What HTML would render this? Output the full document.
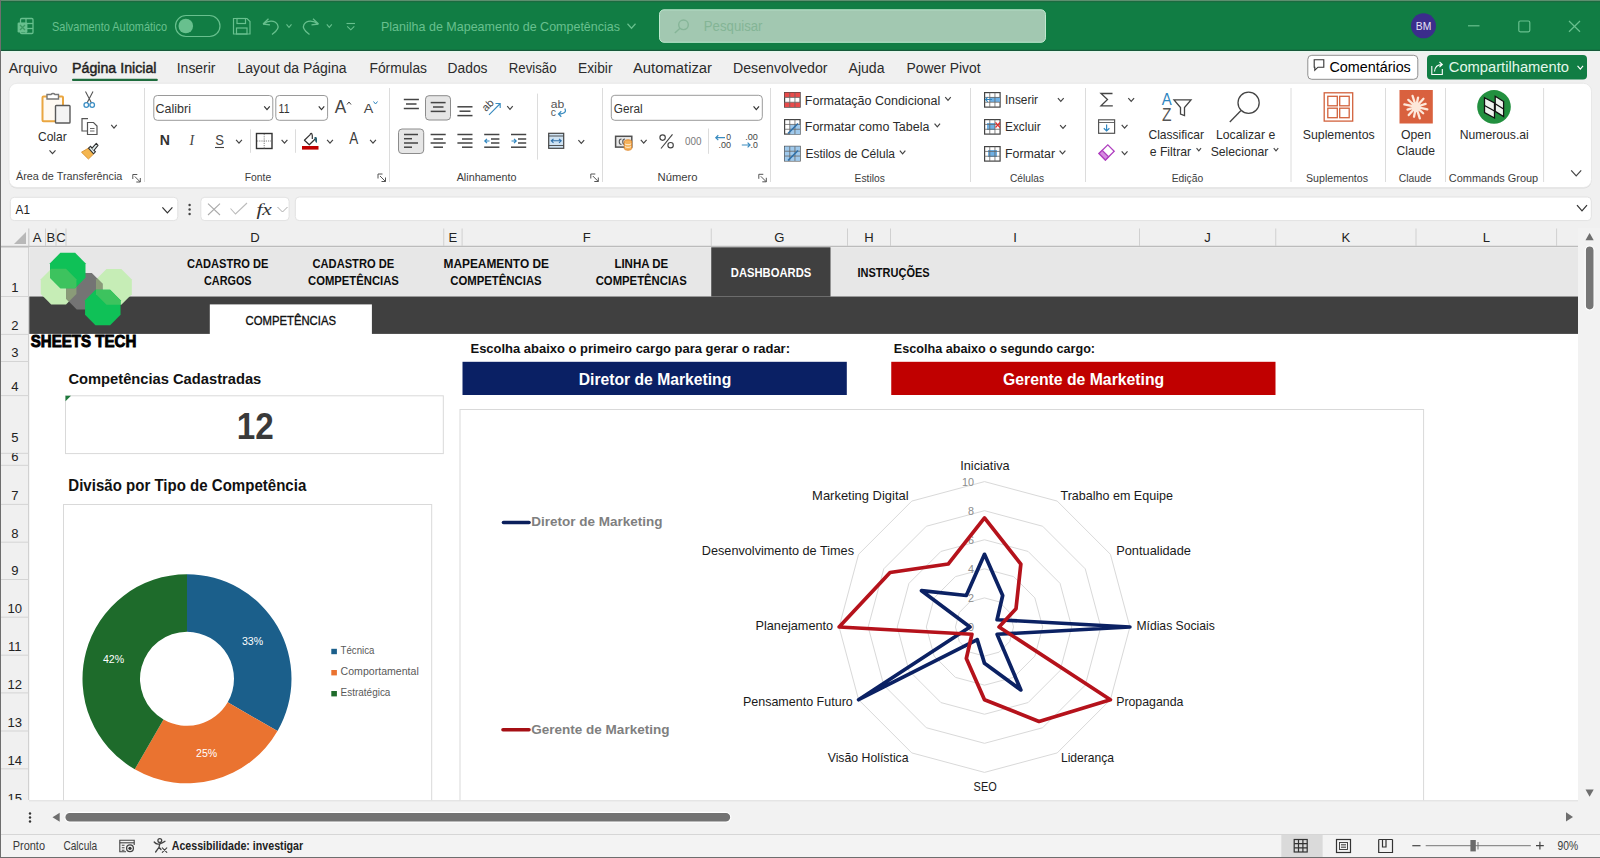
<!DOCTYPE html><html><head><meta charset="utf-8"><title>Excel</title><style>html,body{margin:0;padding:0;width:1600px;height:858px;overflow:hidden;background:#f0f0f0}svg{display:block;font-family:"Liberation Sans",sans-serif}</style></head><body>
<svg width="1600" height="858" viewBox="0 0 1600 858">
<rect x="0" y="0" width="1600" height="858" fill="#f0f0f0" />
<rect x="0" y="0" width="1600" height="50" fill="#117d44" />
<rect x="0" y="0" width="1600" height="1" fill="#5d8f6f" />
<rect x="0" y="1" width="1600" height="1.2" fill="#1c6b40" />
<rect x="0" y="49.8" width="1600" height="1.2" fill="#17583a" />
<g fill="none" stroke="#68c08e" stroke-width="1.3"><rect x="20.5" y="18.5" width="12.5" height="15" rx="1.2"/><line x1="26" y1="18.5" x2="26" y2="33.5"/><line x1="20.5" y1="23.5" x2="33" y2="23.5"/><line x1="26" y1="28.5" x2="33" y2="28.5"/></g>
<rect x="17.6" y="22.6" width="9.8" height="9.8" rx="1.2" fill="#68c08e"/>
<path d="M20 25 L25 30 M25 25 L20 30" stroke="#3d9a63" stroke-width="1.3"/>
<text x="52.00" y="30.60" font-size="12.06" fill="#68c08e" textLength="115.00" lengthAdjust="spacingAndGlyphs" >Salvamento Automático</text>
<rect x="175.5" y="15.5" width="44.5" height="21" rx="10.5" fill="none" stroke="#68c08e" stroke-width="1.2"/>
<circle cx="185.8" cy="26" r="7.3" fill="#68c08e"/>
<g fill="none" stroke="#68c08e" stroke-width="1.2"><path d="M233.5 18.5 H247 L250 21.5 V34 H233.5 Z"/><rect x="237" y="18.5" width="8.5" height="5"/><rect x="236.5" y="28" width="10.5" height="6"/></g>
<g fill="none" stroke="#68c08e" stroke-width="1.3"><path d="M263 24 L268.5 18.8 M263 24 L270 24.8"/><path d="M263.5 24 C268 20 275 20 277.5 24.5 C279.5 28 277 31 272 34.5"/></g>
<path d="M286.50 24.30 L289.00 27.30 L291.50 24.30" fill="none" stroke="#68c08e" stroke-width="1.1"/>
<g fill="none" stroke="#68c08e" stroke-width="1.3"><path d="M318.5 24 L313 18.8 M318.5 24 L311.5 24.8"/><path d="M318 24 C313.5 20 306.5 20 304 24.5 C302 28 304.5 31 309.5 34.5"/></g>
<path d="M326.80 24.30 L329.30 27.30 L331.80 24.30" fill="none" stroke="#68c08e" stroke-width="1.1"/>
<g fill="none" stroke="#68c08e" stroke-width="1.1"><line x1="346.5" y1="23.5" x2="355" y2="23.5"/><path d="M347.2 26.3 L350.8 29.8 L354.3 26.3"/></g>
<text x="381.00" y="31.10" font-size="12.94" fill="#68c08e" textLength="239.00" lengthAdjust="spacingAndGlyphs" >Planilha de Mapeamento de Competências</text>
<path d="M627.50 23.75 L631.50 28.25 L635.50 23.75" fill="none" stroke="#68c08e" stroke-width="1.2"/>
<rect x="659.5" y="9.8" width="386" height="32.5" rx="4.5" fill="#a2c8b1" stroke="#bfe8cf" stroke-width="1"/>
<g fill="none" stroke="#86b598" stroke-width="1.4"><circle cx="683.5" cy="24.8" r="4.8"/><line x1="680" y1="28.3" x2="674.8" y2="33"/></g>
<text x="703.80" y="30.50" font-size="14.53" fill="#84b596" textLength="58.70" lengthAdjust="spacingAndGlyphs" >Pesquisar</text>
<circle cx="1423.5" cy="25.8" r="12.5" fill="#3b2d8c"/>
<text x="1423.50" y="30.00" font-size="11.63" fill="#e8e4f6" text-anchor="middle" textLength="15.50" lengthAdjust="spacingAndGlyphs" >BM</text>
<line x1="1468" y1="25.8" x2="1479.5" y2="25.8" stroke="#68c08e" stroke-width="1.2" />
<rect x="1518.8" y="21" width="11" height="10.8" rx="1.5" fill="none" stroke="#68c08e" stroke-width="1.2"/>
<path d="M1569 21 L1580 31.8 M1580 21 L1569 31.8" stroke="#68c08e" stroke-width="1.2"/>
<rect x="0" y="51" width="1600" height="1.5" fill="#e6f7ed" />
<text x="8.75" y="73.20" font-size="13.95" fill="#2b2b2b" textLength="48.75" lengthAdjust="spacingAndGlyphs" >Arquivo</text>
<text x="72.00" y="73.20" font-size="13.95" fill="#1f1f1f" textLength="84.50" lengthAdjust="spacingAndGlyphs" stroke="#1f1f1f" stroke-width="0.45">Página Inicial</text>
<text x="176.75" y="73.20" font-size="13.95" fill="#2b2b2b" textLength="38.75" lengthAdjust="spacingAndGlyphs" >Inserir</text>
<text x="237.50" y="73.20" font-size="13.95" fill="#2b2b2b" textLength="109.00" lengthAdjust="spacingAndGlyphs" >Layout da Página</text>
<text x="369.50" y="73.20" font-size="13.95" fill="#2b2b2b" textLength="57.50" lengthAdjust="spacingAndGlyphs" >Fórmulas</text>
<text x="447.50" y="73.20" font-size="13.95" fill="#2b2b2b" textLength="40.00" lengthAdjust="spacingAndGlyphs" >Dados</text>
<text x="508.75" y="73.20" font-size="13.95" fill="#2b2b2b" textLength="47.75" lengthAdjust="spacingAndGlyphs" >Revisão</text>
<text x="578.00" y="73.20" font-size="13.95" fill="#2b2b2b" textLength="34.50" lengthAdjust="spacingAndGlyphs" >Exibir</text>
<text x="633.00" y="73.20" font-size="13.95" fill="#2b2b2b" textLength="79.00" lengthAdjust="spacingAndGlyphs" >Automatizar</text>
<text x="733.00" y="73.20" font-size="13.95" fill="#2b2b2b" textLength="94.50" lengthAdjust="spacingAndGlyphs" >Desenvolvedor</text>
<text x="848.50" y="73.20" font-size="13.95" fill="#2b2b2b" textLength="36.00" lengthAdjust="spacingAndGlyphs" >Ajuda</text>
<text x="906.50" y="73.20" font-size="13.95" fill="#2b2b2b" textLength="74.00" lengthAdjust="spacingAndGlyphs" >Power Pivot</text>
<rect x="72" y="78.8" width="85.8" height="2.2" rx="1" fill="#1d6c3d"/>
<rect x="1307.8" y="55.3" width="110" height="24" rx="4" fill="#ffffff" stroke="#8f8f8f" stroke-width="1"/>
<path d="M1314.2 59.8 H1323.8 V67.2 H1318 L1314.8 70.2 V67.2 H1314.2 Z" fill="none" stroke="#333" stroke-width="1.1"/>
<text x="1329.50" y="72.30" font-size="14.53" textLength="81.30" lengthAdjust="spacingAndGlyphs" >Comentários</text>
<rect x="1427" y="55" width="160" height="24.5" rx="4" fill="#117d44"/>
<g fill="none" stroke="#ffffff" stroke-width="1.1"><path d="M1431.8 66 V74.5 H1442.3 V69"/><path d="M1434.5 71.5 C1435 66.5 1438 64.5 1442 64.5 M1439.5 62 L1442.3 64.5 L1439.5 67"/></g>
<text x="1448.80" y="72.30" font-size="14.53" fill="#e3f7ea" textLength="120.20" lengthAdjust="spacingAndGlyphs" >Compartilhamento</text>
<path d="M1577.55 65.90 L1580.30 69.10 L1583.05 65.90" fill="none" stroke="#ffffff" stroke-width="1.1"/>
<rect x="9" y="84.5" width="1582.5" height="104" rx="8" fill="#d6d6d6" opacity="0.8"/>
<rect x="9" y="83.3" width="1582.5" height="104.2" rx="8" fill="#ffffff" stroke="#e4e4e4" stroke-width="0.8"/>
<line x1="537.5" y1="93.6" x2="537.5" y2="159.6" stroke="#dcdcdc" stroke-width="1" />
<line x1="144.5" y1="88" x2="144.5" y2="182" stroke="#dcdcdc" stroke-width="1" />
<line x1="389.5" y1="88" x2="389.5" y2="182" stroke="#dcdcdc" stroke-width="1" />
<line x1="602.5" y1="88" x2="602.5" y2="182" stroke="#dcdcdc" stroke-width="1" />
<line x1="770.5" y1="88" x2="770.5" y2="182" stroke="#dcdcdc" stroke-width="1" />
<line x1="970.5" y1="88" x2="970.5" y2="182" stroke="#dcdcdc" stroke-width="1" />
<line x1="1085.5" y1="88" x2="1085.5" y2="182" stroke="#dcdcdc" stroke-width="1" />
<line x1="1291" y1="88" x2="1291" y2="182" stroke="#dcdcdc" stroke-width="1" />
<line x1="1385.5" y1="88" x2="1385.5" y2="182" stroke="#dcdcdc" stroke-width="1" />
<line x1="1445.5" y1="88" x2="1445.5" y2="182" stroke="#dcdcdc" stroke-width="1" />
<line x1="1543.6" y1="88" x2="1543.6" y2="182" stroke="#dcdcdc" stroke-width="1" />
<text x="16.00" y="180.40" font-size="11.63" fill="#3c3c3c" textLength="106.40" lengthAdjust="spacingAndGlyphs" >Área de Transferência</text>
<text x="244.70" y="180.90" font-size="11.63" fill="#3c3c3c" textLength="26.50" lengthAdjust="spacingAndGlyphs" >Fonte</text>
<text x="456.70" y="181.00" font-size="11.63" fill="#3c3c3c" textLength="59.80" lengthAdjust="spacingAndGlyphs" >Alinhamento</text>
<text x="657.50" y="181.00" font-size="11.63" fill="#3c3c3c" textLength="40.10" lengthAdjust="spacingAndGlyphs" >Número</text>
<text x="854.60" y="181.50" font-size="11.63" fill="#3c3c3c" textLength="30.20" lengthAdjust="spacingAndGlyphs" >Estilos</text>
<text x="1010.00" y="181.50" font-size="11.63" fill="#3c3c3c" textLength="34.00" lengthAdjust="spacingAndGlyphs" >Células</text>
<text x="1171.70" y="181.50" font-size="11.63" fill="#3c3c3c" textLength="31.50" lengthAdjust="spacingAndGlyphs" >Edição</text>
<text x="1306.00" y="181.50" font-size="11.63" fill="#3c3c3c" textLength="62.00" lengthAdjust="spacingAndGlyphs" >Suplementos</text>
<text x="1398.70" y="181.70" font-size="11.63" fill="#3c3c3c" textLength="32.80" lengthAdjust="spacingAndGlyphs" >Claude</text>
<text x="1448.80" y="181.70" font-size="11.63" fill="#3c3c3c" textLength="89.40" lengthAdjust="spacingAndGlyphs" >Commands Group</text>
<g fill="none" stroke="#555" stroke-width="1"><path d="M132.8 179 V174.5 H137.3"/><path d="M134.8 176.5 L140.3 182 M140.3 178 V182 H136.3"/></g>
<g fill="none" stroke="#555" stroke-width="1"><path d="M378.0 178.5 V174.0 H382.5"/><path d="M380.0 176.0 L385.5 181.5 M385.5 177.5 V181.5 H381.5"/></g>
<g fill="none" stroke="#555" stroke-width="1"><path d="M590.8 178.5 V174.0 H595.3"/><path d="M592.8 176.0 L598.3 181.5 M598.3 177.5 V181.5 H594.3"/></g>
<g fill="none" stroke="#555" stroke-width="1"><path d="M758.8 178.8 V174.3 H763.3"/><path d="M760.8 176.3 L766.3 181.8 M766.3 177.8 V181.8 H762.3"/></g>
<g fill="none" stroke-width="1.6"><rect x="42.5" y="96.5" width="20.5" height="24.8" rx="1" stroke="#eaa640" fill="#fffaf2" stroke-width="2"/><path d="M47 96.5 V94.5 H51 A2.5 2.5 0 0 1 55 94.5 H58.5 V99 H47 Z" stroke="#777" fill="#fff" stroke-width="1.4"/></g>
<rect x="55.5" y="105.5" width="14.5" height="17.5" rx="0.8" fill="#f4f4f4" stroke="#5a5a5a" stroke-width="1.4"/>
<text x="38.00" y="140.60" font-size="13.37" fill="#2b2b2b" textLength="28.70" lengthAdjust="spacingAndGlyphs" >Colar</text>
<path d="M49.50 150.35 L52.50 153.65 L55.50 150.35" fill="none" stroke="#444" stroke-width="1.2"/>
<g fill="none" stroke="#555" stroke-width="1.1"><path d="M85.5 91.5 L91.5 103 M93 91.5 L87 103"/></g>
<g fill="none" stroke="#3b8ec4" stroke-width="1.3"><circle cx="86.3" cy="105" r="2.3"/><circle cx="92.2" cy="105" r="2.3"/></g>
<g fill="none" stroke="#555" stroke-width="1.2"><path d="M88 118.7 H82 V131 H87"/><path d="M87.5 122.5 H93.5 L97 126 V134.5 H87.5 Z"/><path d="M90 128.5 H94.5 M90 131 H94.5" stroke-width="0.9"/></g>
<path d="M111.25 124.85 L114.00 128.15 L116.75 124.85" fill="none" stroke="#444" stroke-width="1.2"/>
<path d="M81.5 152.2 L88.4 159 L93.6 154 L88.7 148 Z" fill="#f4b650" stroke="#d8902c" stroke-width="0.9" stroke-linejoin="round"/>
<path d="M88.5 148.2 L93.6 153.8 L95.4 151.8 L90.5 146.4 Z" fill="#e8f2f2" stroke="#2e2e2e" stroke-width="1.1"/>
<path d="M91.8 148.3 L96.3 143.3 L98 145.3 L93.9 150.5" fill="#e2eeee" stroke="#2e2e2e" stroke-width="1.1" stroke-linejoin="round"/>
<rect x="153.8" y="95.5" width="119" height="24.8" rx="3.5" fill="#fff" stroke="#9a9a9a" stroke-width="1"/>
<rect x="275.8" y="95.5" width="51.8" height="24.8" rx="3.5" fill="#fff" stroke="#9a9a9a" stroke-width="1"/>
<text x="155.60" y="112.90" font-size="13.37" fill="#333" textLength="35.40" lengthAdjust="spacingAndGlyphs" >Calibri</text>
<path d="M264.25 106.40 L267.00 109.60 L269.75 106.40" fill="none" stroke="#333" stroke-width="1.2"/>
<text x="278.60" y="112.90" font-size="13.37" fill="#333" textLength="11.00" lengthAdjust="spacingAndGlyphs" >11</text>
<path d="M318.75 106.40 L321.50 109.60 L324.25 106.40" fill="none" stroke="#333" stroke-width="1.2"/>
<text x="334.80" y="112.90" font-size="17.44" fill="#444" textLength="11.50" lengthAdjust="spacingAndGlyphs" >A</text>
<path d="M347 104.5 L349 102 L351 104.5" fill="none" stroke="#444" stroke-width="1"/>
<text x="363.80" y="112.90" font-size="12.94" fill="#444" textLength="9.50" lengthAdjust="spacingAndGlyphs" >A</text>
<path d="M373.5 101.5 L375.5 104 L377.5 101.5" fill="none" stroke="#2f86c0" stroke-width="1"/>
<text x="159.80" y="145.25" font-size="13.95" font-weight="700" fill="#333" textLength="10.20" lengthAdjust="spacingAndGlyphs" >N</text>
<text x="189.50" y="145.25" font-size="13.95" fill="#444" font-family="Liberation Serif" font-style="italic">I</text>
<text x="215.30" y="145.25" font-size="13.95" fill="#444" textLength="8.70" lengthAdjust="spacingAndGlyphs" >S</text>
<line x1="215" y1="147.5" x2="224" y2="147.5" stroke="#444" stroke-width="1.1" />
<path d="M236.10 139.85 L239.00 143.15 L241.90 139.85" fill="none" stroke="#444" stroke-width="1.2"/>
<line x1="250.5" y1="129.3" x2="250.5" y2="152.8" stroke="#dcdcdc" stroke-width="1" />
<rect x="256.5" y="133.5" width="15.5" height="15" fill="none" stroke="#333" stroke-width="1.4"/>
<path d="M264.2 134 V148.5 M257 141 H271.5" stroke="#777" stroke-width="0.9" stroke-dasharray="1.2 1"/>
<path d="M281.60 139.85 L284.50 143.15 L287.40 139.85" fill="none" stroke="#444" stroke-width="1.2"/>
<line x1="295.5" y1="129.3" x2="295.5" y2="152.8" stroke="#dcdcdc" stroke-width="1" />
<path d="M310.2 134.6 L304.4 140.2 L309.3 144.8 L315.2 139 M310.2 134.6 C310.5 132.8 312 133 312.3 135.5 V139" fill="none" stroke="#333" stroke-width="1.2" stroke-linejoin="round"/>
<path d="M314.3 137.5 C315.5 136.5 317 137 317 139 V143 L315.5 142 Z" fill="#2b6070"/>
<rect x="302" y="146" width="16.5" height="3.6" fill="#c00000" />
<path d="M327.10 139.85 L330.00 143.15 L332.90 139.85" fill="none" stroke="#444" stroke-width="1.2"/>
<text x="349.30" y="144.40" font-size="16.28" fill="#3a3a3a" textLength="9.00" lengthAdjust="spacingAndGlyphs" font-weight="300">A</text>
<path d="M370.10 139.85 L373.00 143.15 L375.90 139.85" fill="none" stroke="#444" stroke-width="1.2"/>
<rect x="425.5" y="95.7" width="25" height="24.3" rx="3.5" fill="#e6e6e6" stroke="#8c8c8c" stroke-width="1"/>
<rect x="398.5" y="129" width="25.2" height="24.5" rx="3.5" fill="#e6e6e6" stroke="#8c8c8c" stroke-width="1"/>
<line x1="403.8" y1="99.5" x2="418.9" y2="99.5" stroke="#444" stroke-width="1.5" />
<line x1="406" y1="104" x2="416.5" y2="104" stroke="#444" stroke-width="1.5" />
<line x1="403.8" y1="108.5" x2="418.9" y2="108.5" stroke="#444" stroke-width="1.5" />
<line x1="430.7" y1="102.6" x2="445.6" y2="102.6" stroke="#444" stroke-width="1.5" />
<line x1="433" y1="107" x2="443.5" y2="107" stroke="#444" stroke-width="1.5" />
<line x1="430.7" y1="111.4" x2="445.6" y2="111.4" stroke="#444" stroke-width="1.5" />
<line x1="457.4" y1="106.8" x2="472.5" y2="106.8" stroke="#444" stroke-width="1.5" />
<line x1="459.5" y1="111.2" x2="470.5" y2="111.2" stroke="#444" stroke-width="1.5" />
<line x1="457.4" y1="115.6" x2="472.5" y2="115.6" stroke="#444" stroke-width="1.5" />
<text x="482.00" y="109.50" font-size="10.61" fill="#444" textLength="12.00" lengthAdjust="spacingAndGlyphs" transform="rotate(-45 487 106)">ab</text>
<path d="M489 114.8 L499.8 104 M495.5 103.5 H500.2 V108" fill="none" stroke="#3a8cc0" stroke-width="1.1"/>
<path d="M507.25 106.20 L510.00 109.40 L512.75 106.20" fill="none" stroke="#444" stroke-width="1.2"/>
<text x="550.80" y="108.20" font-size="10.17" fill="#555" textLength="13.50" lengthAdjust="spacingAndGlyphs" >ab</text>
<text x="550.80" y="115.80" font-size="10.17" fill="#555" textLength="5.20" lengthAdjust="spacingAndGlyphs" >c</text>
<path d="M564.8 108.5 C566.5 111.5 565 114 558.5 114 M561.3 111.3 L558.5 114 L561.3 116.7" fill="none" stroke="#3a8cc0" stroke-width="1.2"/>
<line x1="404" y1="134.5" x2="418" y2="134.5" stroke="#444" stroke-width="1.5" />
<line x1="404" y1="138.7" x2="412" y2="138.7" stroke="#444" stroke-width="1.5" />
<line x1="404" y1="143" x2="418" y2="143" stroke="#444" stroke-width="1.5" />
<line x1="404" y1="147.2" x2="412" y2="147.2" stroke="#444" stroke-width="1.5" />
<line x1="430.6" y1="134.5" x2="445.7" y2="134.5" stroke="#444" stroke-width="1.5" />
<line x1="433.5" y1="139" x2="443" y2="139" stroke="#444" stroke-width="1.5" />
<line x1="430.6" y1="143" x2="445.7" y2="143" stroke="#444" stroke-width="1.5" />
<line x1="433.5" y1="147.2" x2="443" y2="147.2" stroke="#444" stroke-width="1.5" />
<line x1="457.4" y1="134.5" x2="472.5" y2="134.5" stroke="#444" stroke-width="1.5" />
<line x1="462" y1="139" x2="472.5" y2="139" stroke="#444" stroke-width="1.5" />
<line x1="457.4" y1="143" x2="472.5" y2="143" stroke="#444" stroke-width="1.5" />
<line x1="462" y1="147.2" x2="472.5" y2="147.2" stroke="#444" stroke-width="1.5" />
<line x1="484.2" y1="134.5" x2="499.4" y2="134.5" stroke="#444" stroke-width="1.5" />
<line x1="491" y1="139" x2="499.4" y2="139" stroke="#444" stroke-width="1.5" />
<line x1="491" y1="143" x2="499.4" y2="143" stroke="#444" stroke-width="1.5" />
<line x1="484.2" y1="147.2" x2="499.4" y2="147.2" stroke="#444" stroke-width="1.5" />
<path d="M489.5 141 H484.8 M487 138.8 L484.8 141 L487 143.2" fill="none" stroke="#2f86c0" stroke-width="1.2"/>
<line x1="511" y1="134.5" x2="526.2" y2="134.5" stroke="#444" stroke-width="1.5" />
<line x1="518" y1="139" x2="526.2" y2="139" stroke="#444" stroke-width="1.5" />
<line x1="518" y1="143" x2="526.2" y2="143" stroke="#444" stroke-width="1.5" />
<line x1="511" y1="147.2" x2="526.2" y2="147.2" stroke="#444" stroke-width="1.5" />
<path d="M511.5 141 H516 M514 138.8 L516.2 141 L514 143.2" fill="none" stroke="#2f86c0" stroke-width="1.2"/>
<rect x="548.7" y="133.3" width="15" height="15" fill="#cfe3f3" stroke="#444" stroke-width="1.2"/>
<path d="M548.7 136 H563.7 M548.7 145.5 H563.7" stroke="#444" stroke-width="0.9"/>
<path d="M551.5 140.8 H561 M553.5 138.8 L551.3 140.8 L553.5 142.8 M559 138.8 L561.2 140.8 L559 142.8" fill="none" stroke="#2f6fa8" stroke-width="1.1"/>
<path d="M578.40 140.05 L581.30 143.35 L584.20 140.05" fill="none" stroke="#444" stroke-width="1.2"/>
<rect x="611.3" y="95.3" width="151" height="25" rx="3.5" fill="#fff" stroke="#9a9a9a" stroke-width="1"/>
<text x="613.80" y="112.70" font-size="13.08" fill="#333" textLength="28.80" lengthAdjust="spacingAndGlyphs" >Geral</text>
<path d="M753.55 106.40 L756.30 109.60 L759.05 106.40" fill="none" stroke="#333" stroke-width="1.2"/>
<rect x="615.6" y="136.3" width="16.2" height="10.8" fill="#e9e9e9" stroke="#505050" stroke-width="1.5"/>
<path d="M621.5 139 C618.5 139 618.5 144.5 621.5 144.5 M625 139 C622 139 622 144.5 625 144.5" fill="none" stroke="#555" stroke-width="1.1"/>
<path d="M624.3 141.5 C624.3 139.3 631.7 139.3 631.7 141.5 V148.5 C631.7 150.7 624.3 150.7 624.3 148.5 Z" fill="#f6b45c" stroke="#e08a30" stroke-width="1"/>
<path d="M624.8 143.8 C626 145 630 145 631.2 143.8 M624.8 146.5 C626 147.7 630 147.7 631.2 146.5" fill="none" stroke="#fff3e0" stroke-width="0.9"/>
<path d="M640.80 139.85 L643.70 143.15 L646.60 139.85" fill="none" stroke="#444" stroke-width="1.2"/>
<g fill="none" stroke="#444" stroke-width="1.15"><circle cx="662.6" cy="137.6" r="2.7"/><circle cx="670.6" cy="145.2" r="2.7"/><line x1="672.5" y1="134.3" x2="661" y2="148.5"/></g>
<text x="685.10" y="144.60" font-size="10.61" fill="#7a7a7a" textLength="16.50" lengthAdjust="spacingAndGlyphs" >000</text>
<line x1="708.5" y1="128.5" x2="708.5" y2="153.8" stroke="#dcdcdc" stroke-width="1" />
<text x="726.30" y="139.80" font-size="8.72" fill="#444" textLength="4.80" lengthAdjust="spacingAndGlyphs" >0</text>
<text x="718.50" y="148.30" font-size="9.59" fill="#444" textLength="12.50" lengthAdjust="spacingAndGlyphs" >.00</text>
<path d="M725 137.7 H715.8 M718.3 135.3 L715.8 137.7 L718.3 140.1" fill="none" stroke="#3a8cc0" stroke-width="1.2"/>
<text x="745.20" y="139.80" font-size="8.72" fill="#444" textLength="12.60" lengthAdjust="spacingAndGlyphs" >.00</text>
<text x="750.50" y="148.30" font-size="9.59" fill="#444" textLength="7.30" lengthAdjust="spacingAndGlyphs" >.0</text>
<path d="M741.8 145 H750 M747.6 142.6 L750.1 145 L747.6 147.4" fill="none" stroke="#3a8cc0" stroke-width="1.2"/>
<rect x="784.6" y="92.6" width="15.5" height="14.5" fill="#fff" stroke="#444" stroke-width="1.2"/>
<rect x="784.6" y="92.6" width="15.5" height="4.8" fill="#e84b4b"/><rect x="784.6" y="102.3" width="15.5" height="4.8" fill="#e84b4b"/>
<line x1="789.77" y1="92.6" x2="789.77" y2="107.1" stroke="#666" stroke-width="0.8" />
<line x1="784.6" y1="97.42999999999999" x2="800.1" y2="97.42999999999999" stroke="#666" stroke-width="0.8" />
<line x1="794.94" y1="92.6" x2="794.94" y2="107.1" stroke="#666" stroke-width="0.8" />
<line x1="784.6" y1="102.25999999999999" x2="800.1" y2="102.25999999999999" stroke="#666" stroke-width="0.8" />
<text x="804.80" y="104.70" font-size="13.52" fill="#2b2b2b" textLength="135.50" lengthAdjust="spacingAndGlyphs" >Formatação Condicional</text>
<path d="M945.25 97.20 L948.00 100.40 L950.75 97.20" fill="none" stroke="#444" stroke-width="1.2"/>
<rect x="784.6" y="119.6" width="15.5" height="14.5" fill="#fff" stroke="#444" stroke-width="1.2"/>
<rect x="790" y="124.5" width="10.2" height="9.8" fill="#9fc9ec"/>
<line x1="789.77" y1="119.6" x2="789.77" y2="134.1" stroke="#666" stroke-width="0.8" />
<line x1="784.6" y1="124.42999999999999" x2="800.1" y2="124.42999999999999" stroke="#666" stroke-width="0.8" />
<line x1="794.94" y1="119.6" x2="794.94" y2="134.1" stroke="#666" stroke-width="0.8" />
<line x1="784.6" y1="129.26" x2="800.1" y2="129.26" stroke="#666" stroke-width="0.8" />
<path d="M788 133.5 L798 123.5" stroke="#2f6fa8" stroke-width="1.6"/>
<text x="804.80" y="131.20" font-size="13.52" fill="#2b2b2b" textLength="124.60" lengthAdjust="spacingAndGlyphs" >Formatar como Tabela</text>
<path d="M934.55 123.70 L937.30 126.90 L940.05 123.70" fill="none" stroke="#444" stroke-width="1.2"/>
<rect x="784.6" y="146.4" width="15.5" height="14.5" fill="#fff" stroke="#444" stroke-width="1.2"/>
<rect x="784.6" y="146.4" width="15.5" height="14.5" fill="#9fc9ec"/>
<line x1="789.77" y1="146.4" x2="789.77" y2="160.9" stroke="#666" stroke-width="0.8" />
<line x1="784.6" y1="151.23000000000002" x2="800.1" y2="151.23000000000002" stroke="#666" stroke-width="0.8" />
<line x1="794.94" y1="146.4" x2="794.94" y2="160.9" stroke="#666" stroke-width="0.8" />
<line x1="784.6" y1="156.06" x2="800.1" y2="156.06" stroke="#666" stroke-width="0.8" />
<path d="M788 160.5 L798 150.5" stroke="#2f6fa8" stroke-width="1.6"/>
<text x="805.40" y="158.10" font-size="13.52" fill="#2b2b2b" textLength="89.60" lengthAdjust="spacingAndGlyphs" >Estilos de Célula</text>
<path d="M899.85 150.70 L902.60 153.90 L905.35 150.70" fill="none" stroke="#444" stroke-width="1.2"/>
<rect x="984.6" y="92.6" width="15.5" height="14.5" fill="#fff" stroke="#444" stroke-width="1.2"/>
<rect x="990" y="97" width="10" height="5" fill="#6fb1e6"/>
<line x1="989.77" y1="92.6" x2="989.77" y2="107.1" stroke="#666" stroke-width="0.8" />
<line x1="984.6" y1="97.42999999999999" x2="1000.1" y2="97.42999999999999" stroke="#666" stroke-width="0.8" />
<line x1="994.94" y1="92.6" x2="994.94" y2="107.1" stroke="#666" stroke-width="0.8" />
<line x1="984.6" y1="102.25999999999999" x2="1000.1" y2="102.25999999999999" stroke="#666" stroke-width="0.8" />
<path d="M992 99.5 H985.5 M987.8 97.2 L985.5 99.5 L987.8 101.8" fill="none" stroke="#2f86c0" stroke-width="1.1"/>
<text x="1005.00" y="103.80" font-size="13.52" fill="#2b2b2b" textLength="33.00" lengthAdjust="spacingAndGlyphs" >Inserir</text>
<path d="M1057.90 98.15 L1060.80 101.45 L1063.70 98.15" fill="none" stroke="#444" stroke-width="1.2"/>
<rect x="984.6" y="119.6" width="15.5" height="14.5" fill="#fff" stroke="#444" stroke-width="1.2"/>
<rect x="987" y="123" width="8" height="7" fill="#6fb1e6"/>
<line x1="989.77" y1="119.6" x2="989.77" y2="134.1" stroke="#666" stroke-width="0.8" />
<line x1="984.6" y1="124.42999999999999" x2="1000.1" y2="124.42999999999999" stroke="#666" stroke-width="0.8" />
<line x1="994.94" y1="119.6" x2="994.94" y2="134.1" stroke="#666" stroke-width="0.8" />
<line x1="984.6" y1="129.26" x2="1000.1" y2="129.26" stroke="#666" stroke-width="0.8" />
<path d="M995.5 122.5 L1000 127.5 M1000 122.5 L995.5 127.5" stroke="#e03030" stroke-width="1.2"/>
<text x="1005.00" y="131.00" font-size="13.52" fill="#2b2b2b" textLength="35.60" lengthAdjust="spacingAndGlyphs" >Excluir</text>
<path d="M1060.10 125.15 L1063.00 128.45 L1065.90 125.15" fill="none" stroke="#444" stroke-width="1.2"/>
<rect x="984.6" y="146.6" width="15.5" height="14.5" fill="#fff" stroke="#444" stroke-width="1.2"/>
<rect x="988" y="150" width="9" height="7" fill="#6fb1e6"/>
<line x1="989.77" y1="146.6" x2="989.77" y2="161.1" stroke="#666" stroke-width="0.8" />
<line x1="984.6" y1="151.43" x2="1000.1" y2="151.43" stroke="#666" stroke-width="0.8" />
<line x1="994.94" y1="146.6" x2="994.94" y2="161.1" stroke="#666" stroke-width="0.8" />
<line x1="984.6" y1="156.26" x2="1000.1" y2="156.26" stroke="#666" stroke-width="0.8" />
<text x="1005.00" y="158.00" font-size="13.52" fill="#2b2b2b" textLength="50.00" lengthAdjust="spacingAndGlyphs" >Formatar</text>
<path d="M1059.60 150.65 L1062.50 153.95 L1065.40 150.65" fill="none" stroke="#444" stroke-width="1.2"/>
<path d="M1112.5 93.5 H1101 L1107.5 99.5 L1101 105.8 H1112.8" fill="none" stroke="#444" stroke-width="1.3"/>
<path d="M1128.30 98.15 L1131.20 101.45 L1134.10 98.15" fill="none" stroke="#444" stroke-width="1.2"/>
<rect x="1098.6" y="119.8" width="16" height="13.5" fill="#fff" stroke="#555" stroke-width="1.2"/><line x1="1098.6" y1="122.5" x2="1114.6" y2="122.5" stroke="#555" stroke-width="0.9"/>
<path d="M1106.6 124.5 V131 M1103.8 128.3 L1106.6 131 L1109.4 128.3" fill="none" stroke="#2f86c0" stroke-width="1.2"/>
<path d="M1121.70 124.85 L1124.60 128.15 L1127.50 124.85" fill="none" stroke="#444" stroke-width="1.2"/>
<path d="M1099 153.5 L1107.8 144.8 L1114.2 151.2 L1105.4 160 Z" fill="#fff" stroke="#b040c0" stroke-width="1.3"/><path d="M1099 153.5 L1102.2 150.3 L1108.6 156.7 L1105.4 160 Z" fill="#d58ae0" stroke="#b040c0" stroke-width="1.3"/>
<path d="M1121.70 151.35 L1124.60 154.65 L1127.50 151.35" fill="none" stroke="#444" stroke-width="1.2"/>
<text x="1161.70" y="105.00" font-size="16.42" fill="#2f86c0" textLength="10.00" lengthAdjust="spacingAndGlyphs" >A</text>
<text x="1162.00" y="120.70" font-size="17.44" fill="#555" textLength="9.50" lengthAdjust="spacingAndGlyphs" >Z</text>
<path d="M1174 99.8 H1191 L1184.5 107.5 V115.5 L1180.5 114 V107.5 Z" fill="none" stroke="#444" stroke-width="1.3"/>
<text x="1148.50" y="138.70" font-size="12.06" fill="#2b2b2b" textLength="55.50" lengthAdjust="spacingAndGlyphs" >Classificar</text>
<text x="1149.70" y="155.70" font-size="12.06" fill="#2b2b2b" textLength="41.50" lengthAdjust="spacingAndGlyphs" >e Filtrar</text>
<path d="M1196.55 148.10 L1198.80 150.90 L1201.05 148.10" fill="none" stroke="#444" stroke-width="1.1"/>
<circle cx="1248.6" cy="102.7" r="10.6" fill="none" stroke="#444" stroke-width="1.3"/><line x1="1241" y1="110.5" x2="1229.8" y2="122" stroke="#444" stroke-width="1.3"/>
<text x="1216.00" y="138.70" font-size="12.06" fill="#2b2b2b" textLength="59.20" lengthAdjust="spacingAndGlyphs" >Localizar e</text>
<text x="1210.70" y="155.70" font-size="12.06" fill="#2b2b2b" textLength="57.70" lengthAdjust="spacingAndGlyphs" >Selecionar</text>
<path d="M1273.75 148.10 L1276.00 150.90 L1278.25 148.10" fill="none" stroke="#444" stroke-width="1.1"/>
<g fill="none" stroke="#d2623c" stroke-width="1.3"><rect x="1324.2" y="92.8" width="28.5" height="28.3"/><rect x="1327.8" y="96.3" width="9.5" height="9.5"/><rect x="1339.7" y="96.3" width="9.5" height="9.5"/><rect x="1327.8" y="108.2" width="9.5" height="9.5"/><rect x="1339.7" y="108.2" width="9.5" height="9.5"/></g>
<text x="1302.70" y="138.70" font-size="12.06" fill="#2b2b2b" textLength="72.00" lengthAdjust="spacingAndGlyphs" >Suplementos</text>
<rect x="1399.5" y="90" width="33.3" height="33.5" fill="#d9613e"/>
<path d="M1418.25 107.36 L1427.35 109.29 M1417.73 108.37 L1423.16 113.26 M1416.78 108.99 L1419.81 118.31 M1415.64 109.05 L1414.02 116.68 M1414.63 108.53 L1408.74 115.07 M1414.01 107.58 L1407.54 109.68 M1413.95 106.44 L1404.36 104.41 M1414.47 105.43 L1408.30 99.87 M1415.42 104.81 L1412.55 95.96 M1416.56 104.75 L1418.08 97.61 M1417.57 105.27 L1423.46 98.73 M1418.19 106.22 L1425.61 103.81" stroke="#fde8da" stroke-width="2.3" stroke-linecap="round"/>
<circle cx="1416.1" cy="106.9" r="3" fill="#fde8da"/>
<text x="1401.00" y="138.60" font-size="12.06" fill="#2b2b2b" textLength="30.00" lengthAdjust="spacingAndGlyphs" >Open</text>
<text x="1396.60" y="155.20" font-size="12.06" fill="#2b2b2b" textLength="38.40" lengthAdjust="spacingAndGlyphs" >Claude</text>
<circle cx="1494" cy="106.9" r="16.8" fill="#22903f"/>
<g fill="#eef3ee" stroke="#111" stroke-width="1.3" stroke-linejoin="miter"><path d="M1484.5 97.7 L1494.5 103 V118 L1484.5 112.5 Z"/><path d="M1495.2 96.3 L1503.6 101.5 V116.5 L1495.2 111.3 Z"/></g>
<path d="M1484.5 105.5 L1494.5 111 M1495.2 103.8 L1503.6 109" stroke="#111" stroke-width="1.3"/>
<text x="1459.80" y="138.60" font-size="12.06" fill="#2b2b2b" textLength="69.00" lengthAdjust="spacingAndGlyphs" >Numerous.ai</text>
<path d="M1571.20 170.45 L1576.20 175.95 L1581.20 170.45" fill="none" stroke="#444" stroke-width="1.2"/>
<rect x="10.3" y="197.3" width="167.5" height="23.3" rx="4" fill="#fff" stroke="#e2e2e2" stroke-width="1"/>
<text x="15.60" y="214.00" font-size="13.66" fill="#222" textLength="14.40" lengthAdjust="spacingAndGlyphs" >A1</text>
<path d="M162.40 207.45 L167.40 212.95 L172.40 207.45" fill="none" stroke="#333" stroke-width="1.2"/>
<circle cx="189.6" cy="205" r="1.2" fill="#444"/>
<circle cx="189.6" cy="209.5" r="1.2" fill="#444"/>
<circle cx="189.6" cy="214" r="1.2" fill="#444"/>
<rect x="200.8" y="197.3" width="88.3" height="23.3" rx="4" fill="#fff" stroke="#e2e2e2" stroke-width="1"/>
<path d="M208 203.6 L220 215 M220 203.6 L208 215" stroke="#aaa" stroke-width="1.1"/>
<path d="M230.5 208.5 L235.5 214 L247 203" fill="none" stroke="#bbb" stroke-width="1.1"/>
<text x="256.40" y="214.50" font-size="15.99" fill="#333" font-family="Liberation Serif" textLength="15.50" lengthAdjust="spacingAndGlyphs" font-style="italic">fx</text>
<path d="M277.50 207.00 L282.50 212.00 L287.50 207.00" fill="none" stroke="#aaa" stroke-width="1.0"/>
<rect x="295.3" y="197" width="1296" height="23.6" rx="4" fill="#fff" stroke="#e2e2e2" stroke-width="1"/>
<path d="M1577.00 205.10 L1582.00 210.90 L1587.00 205.10" fill="none" stroke="#333" stroke-width="1.2"/>
<rect x="29" y="228" width="1549" height="18.5" fill="#f0f0f0" />
<line x1="0" y1="246.6" x2="1578" y2="246.6" stroke="#bcbcbc" stroke-width="1.6" />
<path d="M14 244 L26 232 V244 Z" fill="#b8b8b8"/>
<line x1="45.5" y1="228.5" x2="45.5" y2="246" stroke="#d0d0d0" stroke-width="1" />
<text x="37.15" y="242.40" font-size="13.08" fill="#222" text-anchor="middle" >A</text>
<line x1="56" y1="228.5" x2="56" y2="246" stroke="#d0d0d0" stroke-width="1" />
<text x="50.75" y="242.40" font-size="13.08" fill="#222" text-anchor="middle" >B</text>
<line x1="66" y1="228.5" x2="66" y2="246" stroke="#d0d0d0" stroke-width="1" />
<text x="61.00" y="242.40" font-size="13.08" fill="#222" text-anchor="middle" >C</text>
<line x1="443.75" y1="228.5" x2="443.75" y2="246" stroke="#d0d0d0" stroke-width="1" />
<text x="254.88" y="242.40" font-size="13.08" fill="#222" text-anchor="middle" >D</text>
<line x1="462.1" y1="228.5" x2="462.1" y2="246" stroke="#d0d0d0" stroke-width="1" />
<text x="452.93" y="242.40" font-size="13.08" fill="#222" text-anchor="middle" >E</text>
<line x1="711.25" y1="228.5" x2="711.25" y2="246" stroke="#d0d0d0" stroke-width="1" />
<text x="586.67" y="242.40" font-size="13.08" fill="#222" text-anchor="middle" >F</text>
<line x1="847.5" y1="228.5" x2="847.5" y2="246" stroke="#d0d0d0" stroke-width="1" />
<text x="779.38" y="242.40" font-size="13.08" fill="#222" text-anchor="middle" >G</text>
<line x1="890.5" y1="228.5" x2="890.5" y2="246" stroke="#d0d0d0" stroke-width="1" />
<text x="869.00" y="242.40" font-size="13.08" fill="#222" text-anchor="middle" >H</text>
<line x1="1139.5" y1="228.5" x2="1139.5" y2="246" stroke="#d0d0d0" stroke-width="1" />
<text x="1015.00" y="242.40" font-size="13.08" fill="#222" text-anchor="middle" >I</text>
<line x1="1275.75" y1="228.5" x2="1275.75" y2="246" stroke="#d0d0d0" stroke-width="1" />
<text x="1207.62" y="242.40" font-size="13.08" fill="#222" text-anchor="middle" >J</text>
<line x1="1416" y1="228.5" x2="1416" y2="246" stroke="#d0d0d0" stroke-width="1" />
<text x="1345.88" y="242.40" font-size="13.08" fill="#222" text-anchor="middle" >K</text>
<line x1="1556.6" y1="228.5" x2="1556.6" y2="246" stroke="#d0d0d0" stroke-width="1" />
<text x="1486.30" y="242.40" font-size="13.08" fill="#222" text-anchor="middle" >L</text>
<line x1="28.8" y1="228.5" x2="28.8" y2="800" stroke="#c4c4c4" stroke-width="1" />
<rect x="29.3" y="247.3" width="1548.7" height="553" fill="#ffffff" />
<line x1="1" y1="296.5" x2="28.5" y2="296.5" stroke="#d4d4d4" stroke-width="1" />
<text x="14.80" y="292.20" font-size="13.08" fill="#222" text-anchor="middle" clip-path="url(#rh0)">1</text>
<line x1="1" y1="334.4" x2="28.5" y2="334.4" stroke="#d4d4d4" stroke-width="1" />
<text x="14.80" y="330.10" font-size="13.08" fill="#222" text-anchor="middle" clip-path="url(#rh1)">2</text>
<line x1="1" y1="361.5" x2="28.5" y2="361.5" stroke="#d4d4d4" stroke-width="1" />
<text x="14.80" y="357.20" font-size="13.08" fill="#222" text-anchor="middle" clip-path="url(#rh2)">3</text>
<line x1="1" y1="395.6" x2="28.5" y2="395.6" stroke="#d4d4d4" stroke-width="1" />
<text x="14.80" y="391.30" font-size="13.08" fill="#222" text-anchor="middle" clip-path="url(#rh3)">4</text>
<line x1="1" y1="453.3" x2="28.5" y2="453.3" stroke="#d4d4d4" stroke-width="1" />
<text x="14.80" y="441.90" font-size="13.08" fill="#222" text-anchor="middle" clip-path="url(#rh4)">5</text>
<line x1="1" y1="465.3" x2="28.5" y2="465.3" stroke="#d4d4d4" stroke-width="1" />
<text x="14.80" y="461.00" font-size="13.08" fill="#222" text-anchor="middle" clip-path="url(#rh5)">6</text>
<line x1="1" y1="504.4" x2="28.5" y2="504.4" stroke="#d4d4d4" stroke-width="1" />
<text x="14.80" y="500.10" font-size="13.08" fill="#222" text-anchor="middle" clip-path="url(#rh6)">7</text>
<line x1="1" y1="542.2" x2="28.5" y2="542.2" stroke="#d4d4d4" stroke-width="1" />
<text x="14.80" y="537.90" font-size="13.08" fill="#222" text-anchor="middle" clip-path="url(#rh7)">8</text>
<line x1="1" y1="579.5" x2="28.5" y2="579.5" stroke="#d4d4d4" stroke-width="1" />
<text x="14.80" y="575.20" font-size="13.08" fill="#222" text-anchor="middle" clip-path="url(#rh8)">9</text>
<line x1="1" y1="617.2" x2="28.5" y2="617.2" stroke="#d4d4d4" stroke-width="1" />
<text x="14.80" y="612.90" font-size="13.08" fill="#222" text-anchor="middle" clip-path="url(#rh9)">10</text>
<line x1="1" y1="655.2" x2="28.5" y2="655.2" stroke="#d4d4d4" stroke-width="1" />
<text x="14.80" y="650.90" font-size="13.08" fill="#222" text-anchor="middle" clip-path="url(#rh10)">11</text>
<line x1="1" y1="692.9" x2="28.5" y2="692.9" stroke="#d4d4d4" stroke-width="1" />
<text x="14.80" y="688.60" font-size="13.08" fill="#222" text-anchor="middle" clip-path="url(#rh11)">12</text>
<line x1="1" y1="731" x2="28.5" y2="731" stroke="#d4d4d4" stroke-width="1" />
<text x="14.80" y="726.70" font-size="13.08" fill="#222" text-anchor="middle" clip-path="url(#rh12)">13</text>
<line x1="1" y1="768.8" x2="28.5" y2="768.8" stroke="#d4d4d4" stroke-width="1" />
<text x="14.80" y="764.50" font-size="13.08" fill="#222" text-anchor="middle" clip-path="url(#rh13)">14</text>
<line x1="1" y1="806.6" x2="28.5" y2="806.6" stroke="#d4d4d4" stroke-width="1" />
<text x="14.80" y="803.20" font-size="13.08" fill="#222" text-anchor="middle" clip-path="url(#rh14)">15</text>
<defs><clipPath id="rh0"><rect x="0" y="247" width="29" height="49.5"/></clipPath><clipPath id="rh1"><rect x="0" y="296.5" width="29" height="37.89999999999998"/></clipPath><clipPath id="rh2"><rect x="0" y="334.4" width="29" height="27.100000000000023"/></clipPath><clipPath id="rh3"><rect x="0" y="361.5" width="29" height="34.10000000000002"/></clipPath><clipPath id="rh4"><rect x="0" y="395.6" width="29" height="57.69999999999999"/></clipPath><clipPath id="rh5"><rect x="0" y="453.3" width="29" height="12.0"/></clipPath><clipPath id="rh6"><rect x="0" y="465.3" width="29" height="39.099999999999966"/></clipPath><clipPath id="rh7"><rect x="0" y="504.4" width="29" height="37.80000000000007"/></clipPath><clipPath id="rh8"><rect x="0" y="542.2" width="29" height="37.299999999999955"/></clipPath><clipPath id="rh9"><rect x="0" y="579.5" width="29" height="37.700000000000045"/></clipPath><clipPath id="rh10"><rect x="0" y="617.2" width="29" height="38.0"/></clipPath><clipPath id="rh11"><rect x="0" y="655.2" width="29" height="37.69999999999993"/></clipPath><clipPath id="rh12"><rect x="0" y="692.9" width="29" height="38.10000000000002"/></clipPath><clipPath id="rh13"><rect x="0" y="731" width="29" height="37.799999999999955"/></clipPath><clipPath id="rh14"><rect x="0" y="768.8" width="29" height="31.5"/></clipPath></defs>
<rect x="29.3" y="247.3" width="1548.7" height="49.2" fill="#e7e7e7" />
<rect x="29.3" y="296.5" width="1548.7" height="37.4" fill="#404040" />
<rect x="711.25" y="247.3" width="119.25" height="49.2" fill="#404040" />
<rect x="209.8" y="304.4" width="162.1" height="30" fill="#ffffff" />
<text x="186.90" y="268.40" font-size="13.08" font-weight="700" fill="#0d0d0d" textLength="81.50" lengthAdjust="spacingAndGlyphs" >CADASTRO DE</text>
<text x="204.00" y="284.80" font-size="13.08" font-weight="700" fill="#0d0d0d" textLength="47.60" lengthAdjust="spacingAndGlyphs" >CARGOS</text>
<text x="312.50" y="268.40" font-size="13.08" font-weight="700" fill="#0d0d0d" textLength="81.70" lengthAdjust="spacingAndGlyphs" >CADASTRO DE</text>
<text x="308.00" y="284.80" font-size="13.08" font-weight="700" fill="#0d0d0d" textLength="90.90" lengthAdjust="spacingAndGlyphs" >COMPETÊNCIAS</text>
<text x="443.50" y="268.30" font-size="13.08" font-weight="700" fill="#0d0d0d" textLength="105.50" lengthAdjust="spacingAndGlyphs" >MAPEAMENTO DE</text>
<text x="450.20" y="285.00" font-size="13.08" font-weight="700" fill="#0d0d0d" textLength="91.50" lengthAdjust="spacingAndGlyphs" >COMPETÊNCIAS</text>
<text x="614.40" y="268.30" font-size="13.08" font-weight="700" fill="#0d0d0d" textLength="53.90" lengthAdjust="spacingAndGlyphs" >LINHA DE</text>
<text x="595.70" y="285.00" font-size="13.08" font-weight="700" fill="#0d0d0d" textLength="91.10" lengthAdjust="spacingAndGlyphs" >COMPETÊNCIAS</text>
<text x="730.80" y="276.70" font-size="13.08" font-weight="700" fill="#ffffff" textLength="80.50" lengthAdjust="spacingAndGlyphs" >DASHBOARDS</text>
<text x="857.50" y="276.70" font-size="13.08" font-weight="700" fill="#0d0d0d" textLength="72.20" lengthAdjust="spacingAndGlyphs" >INSTRUÇÕES</text>
<text x="245.50" y="324.70" font-size="12.65" textLength="90.50" lengthAdjust="spacingAndGlyphs" stroke="#262626" stroke-width="0.35">COMPETÊNCIAS</text>
<polygon points="76.43,294.09 65.99,304.53 51.21,304.53 40.77,294.09 40.77,279.31 51.21,268.87 65.99,268.87 76.43,279.31" fill="#c6edb6" />
<polygon points="131.82,294.32 121.32,304.82 106.48,304.82 95.98,294.32 95.98,279.48 106.48,268.98 121.32,268.98 131.82,279.48" fill="#c6edb6" />
<polygon points="102.50,298.74 91.84,309.40 76.76,309.40 66.10,298.74 66.10,283.66 76.76,273.00 91.84,273.00 102.50,283.66" fill="#747474" />
<clipPath id="cg1"><polygon points="76.43,294.09 65.99,304.53 51.21,304.53 40.77,294.09 40.77,279.31 51.21,268.87 65.99,268.87 76.43,279.31" fill="#000" /></clipPath>
<clipPath id="cg2"><polygon points="131.82,294.32 121.32,304.82 106.48,304.82 95.98,294.32 95.98,279.48 106.48,268.98 121.32,268.98 131.82,279.48" fill="#000" /></clipPath>
<g clip-path="url(#cg1)"><polygon points="102.50,298.74 91.84,309.40 76.76,309.40 66.10,298.74 66.10,283.66 76.76,273.00 91.84,273.00 102.50,283.66" fill="#8a9b78" /></g>
<g clip-path="url(#cg2)"><polygon points="102.50,298.74 91.84,309.40 76.76,309.40 66.10,298.74 66.10,283.66 76.76,273.00 91.84,273.00 102.50,283.66" fill="#8a9b78" /></g>
<polygon points="85.49,277.85 75.10,288.24 60.40,288.24 50.01,277.85 50.01,263.15 60.40,252.76 75.10,252.76 85.49,263.15" fill="#0fc157" />
<polygon points="120.54,314.85 110.15,325.24 95.45,325.24 85.06,314.85 85.06,300.15 95.45,289.76 110.15,289.76 120.54,300.15" fill="#0fc157" />
<g clip-path="url(#cg1)"><polygon points="85.49,277.85 75.10,288.24 60.40,288.24 50.01,277.85 50.01,263.15 60.40,252.76 75.10,252.76 85.49,263.15" fill="#3dc35e" /></g>
<g clip-path="url(#cg2)"><polygon points="120.54,314.85 110.15,325.24 95.45,325.24 85.06,314.85 85.06,300.15 95.45,289.76 110.15,289.76 120.54,300.15" fill="#3dc35e" /></g>
<text x="30.80" y="347.00" font-size="15.99" font-weight="700" fill="#000" textLength="105.50" lengthAdjust="spacingAndGlyphs" stroke="#000" stroke-width="0.9">SHEETS TECH</text>
<text x="68.40" y="384.20" font-size="14.83" font-weight="700" fill="#111" textLength="192.90" lengthAdjust="spacingAndGlyphs" >Competências Cadastradas</text>
<rect x="65.5" y="395.8" width="377.8" height="57.8" fill="#fff" stroke="#d9d9d9" stroke-width="1"/>
<path d="M65.5 395.8 H71 L65.5 401.3 Z" fill="#1e7a3c"/>
<text x="236.70" y="439.00" font-size="37.79" font-weight="700" fill="#3a3a3a" textLength="37.00" lengthAdjust="spacingAndGlyphs" >12</text>
<text x="68.30" y="491.40" font-size="15.70" font-weight="700" fill="#111" textLength="238.00" lengthAdjust="spacingAndGlyphs" >Divisão por Tipo de Competência</text>
<rect x="63.5" y="504.5" width="368.2" height="320" fill="#fff" stroke="#d9d9d9" stroke-width="1"/>
<path d="M187.00 574.30 A104.5 104.5 0 0 1 277.50 731.05 L227.70 702.30 A47 47 0 0 0 187.00 631.80 Z" fill="#1b5f8b"/>
<path d="M277.50 731.05 A104.5 104.5 0 0 1 134.75 769.30 L163.50 719.50 A47 47 0 0 0 227.70 702.30 Z" fill="#ea7330"/>
<path d="M134.75 769.30 A104.5 104.5 0 0 1 187.00 574.30 L187.00 631.80 A47 47 0 0 0 163.50 719.50 Z" fill="#1e6b2b"/>
<text x="252.50" y="645.00" font-size="11.05" fill="#ffffff" text-anchor="middle" textLength="21.20" lengthAdjust="spacingAndGlyphs" >33%</text>
<text x="206.60" y="756.50" font-size="11.05" fill="#ffffff" text-anchor="middle" textLength="21.20" lengthAdjust="spacingAndGlyphs" >25%</text>
<text x="113.50" y="662.50" font-size="11.05" fill="#ffffff" text-anchor="middle" textLength="21.20" lengthAdjust="spacingAndGlyphs" >42%</text>
<rect x="331.3" y="648.8" width="5.6" height="5.4" fill="#1b5f8b" />
<text x="340.60" y="654.10" font-size="10.32" fill="#595959" textLength="33.80" lengthAdjust="spacingAndGlyphs" >Técnica</text>
<rect x="331.3" y="670" width="5.6" height="5.4" fill="#ea7330" />
<text x="340.60" y="675.30" font-size="10.32" fill="#595959" textLength="78.20" lengthAdjust="spacingAndGlyphs" >Comportamental</text>
<rect x="331.3" y="691" width="5.6" height="5.4" fill="#1e6b2b" />
<text x="340.60" y="696.30" font-size="10.32" fill="#595959" textLength="49.80" lengthAdjust="spacingAndGlyphs" >Estratégica</text>
<text x="470.50" y="352.50" font-size="13.08" font-weight="700" fill="#111" textLength="319.50" lengthAdjust="spacingAndGlyphs" >Escolha abaixo o primeiro cargo para gerar o radar:</text>
<rect x="462.5" y="361.8" width="384.3" height="33.2" fill="#0a2064" />
<text x="578.75" y="384.50" font-size="16.57" font-weight="700" fill="#ffffff" textLength="152.50" lengthAdjust="spacingAndGlyphs" >Diretor de Marketing</text>
<text x="893.75" y="352.50" font-size="13.08" font-weight="700" fill="#111" textLength="201.30" lengthAdjust="spacingAndGlyphs" >Escolha abaixo o segundo cargo:</text>
<rect x="891.25" y="361.8" width="384.25" height="33.2" fill="#c00000" />
<text x="1003.00" y="384.50" font-size="16.57" font-weight="700" fill="#ffffff" textLength="161.20" lengthAdjust="spacingAndGlyphs" >Gerente de Marketing</text>
<rect x="460" y="409.5" width="963.6" height="420" fill="#fff" stroke="#d9d9d9" stroke-width="1"/>
<line x1="503.5" y1="522.5" x2="529" y2="522.5" stroke="#0b1f5c" stroke-width="3.6" stroke-linecap="round"/>
<text x="531.25" y="526.30" font-size="12.79" font-weight="700" fill="#7f7f7f" textLength="131.20" lengthAdjust="spacingAndGlyphs" >Diretor de Marketing</text>
<line x1="503" y1="729.8" x2="529" y2="729.8" stroke="#a50f14" stroke-width="3.6" stroke-linecap="round"/>
<text x="531.25" y="733.80" font-size="12.79" font-weight="700" fill="#7f7f7f" textLength="138.20" lengthAdjust="spacingAndGlyphs" >Gerente de Marketing</text>
<polygon points="984.50,597.92 999.04,601.82 1009.68,612.46 1013.58,627.00 1009.68,641.54 999.04,652.18 984.50,656.08 969.96,652.18 959.32,641.54 955.42,627.00 959.32,612.46 969.96,601.82" fill="none" stroke="#d9d9d9" stroke-width="1"/>
<polygon points="984.50,568.84 1013.58,576.63 1034.87,597.92 1042.66,627.00 1034.87,656.08 1013.58,677.37 984.50,685.16 955.42,677.37 934.13,656.08 926.34,627.00 934.13,597.92 955.42,576.63" fill="none" stroke="#d9d9d9" stroke-width="1"/>
<polygon points="984.50,539.76 1028.12,551.45 1060.05,583.38 1071.74,627.00 1060.05,670.62 1028.12,702.55 984.50,714.24 940.88,702.55 908.95,670.62 897.26,627.00 908.95,583.38 940.88,551.45" fill="none" stroke="#d9d9d9" stroke-width="1"/>
<polygon points="984.50,510.68 1042.66,526.26 1085.24,568.84 1100.82,627.00 1085.24,685.16 1042.66,727.74 984.50,743.32 926.34,727.74 883.76,685.16 868.18,627.00 883.76,568.84 926.34,526.26" fill="none" stroke="#d9d9d9" stroke-width="1"/>
<polygon points="984.50,481.60 1057.20,501.08 1110.42,554.30 1129.90,627.00 1110.42,699.70 1057.20,752.92 984.50,772.40 911.80,752.92 858.58,699.70 839.10,627.00 858.58,554.30 911.80,501.08" fill="none" stroke="#d9d9d9" stroke-width="1"/>
<text x="974.00" y="631.00" font-size="10.76" fill="#8c8c8c" text-anchor="end" >0</text>
<text x="974.00" y="601.92" font-size="10.76" fill="#8c8c8c" text-anchor="end" >2</text>
<text x="974.00" y="572.84" font-size="10.76" fill="#8c8c8c" text-anchor="end" >4</text>
<text x="974.00" y="543.76" font-size="10.76" fill="#8c8c8c" text-anchor="end" >6</text>
<text x="974.00" y="514.68" font-size="10.76" fill="#8c8c8c" text-anchor="end" >8</text>
<text x="974.00" y="485.60" font-size="10.76" fill="#8c8c8c" text-anchor="end" >10</text>
<polygon points="984.50,554.30 1002.67,595.52 997.09,619.73 1129.90,627.00 997.09,634.27 1020.85,689.96 984.50,663.35 977.23,639.59 858.58,699.70 969.96,627.00 921.54,590.65 966.32,595.52" fill="none" stroke="#0b2163" stroke-width="3.7" stroke-linejoin="round"/>
<polygon points="984.50,517.95 1020.85,564.04 1015.98,608.83 999.04,627.00 1110.42,699.70 1039.03,721.44 984.50,699.70 966.33,658.48 971.91,634.27 839.10,627.00 890.06,572.48 948.15,564.04" fill="none" stroke="#b5121b" stroke-width="3.7" stroke-linejoin="round"/>
<text x="960.30" y="470.10" font-size="12.06" fill="#1a1a1a" textLength="49.30" lengthAdjust="spacingAndGlyphs" >Iniciativa</text>
<text x="1060.50" y="499.90" font-size="12.06" fill="#1a1a1a" textLength="112.40" lengthAdjust="spacingAndGlyphs" >Trabalho em Equipe</text>
<text x="1116.20" y="555.10" font-size="12.06" fill="#1a1a1a" textLength="74.80" lengthAdjust="spacingAndGlyphs" >Pontualidade</text>
<text x="1136.40" y="629.90" font-size="12.06" fill="#1a1a1a" textLength="78.40" lengthAdjust="spacingAndGlyphs" >Mídias Sociais</text>
<text x="1116.20" y="706.10" font-size="12.06" fill="#1a1a1a" textLength="67.20" lengthAdjust="spacingAndGlyphs" >Propaganda</text>
<text x="1060.90" y="761.60" font-size="12.06" fill="#1a1a1a" textLength="53.20" lengthAdjust="spacingAndGlyphs" >Liderança</text>
<text x="973.60" y="791.40" font-size="12.06" fill="#1a1a1a" textLength="23.10" lengthAdjust="spacingAndGlyphs" >SEO</text>
<text x="827.70" y="761.60" font-size="12.06" fill="#1a1a1a" textLength="80.90" lengthAdjust="spacingAndGlyphs" >Visão Holística</text>
<text x="742.90" y="706.10" font-size="12.06" fill="#1a1a1a" textLength="109.90" lengthAdjust="spacingAndGlyphs" >Pensamento Futuro</text>
<text x="755.50" y="629.90" font-size="12.06" fill="#1a1a1a" textLength="77.60" lengthAdjust="spacingAndGlyphs" >Planejamento</text>
<text x="701.80" y="555.10" font-size="12.06" fill="#1a1a1a" textLength="152.20" lengthAdjust="spacingAndGlyphs" >Desenvolvimento de Times</text>
<text x="812.10" y="499.90" font-size="12.06" fill="#1a1a1a" textLength="96.50" lengthAdjust="spacingAndGlyphs" >Marketing Digital</text>
<rect x="1578" y="228" width="22" height="606" fill="#f2f2f2" />
<path d="M1585.5 240.2 L1589.6 233 L1593.7 240.2 Z" fill="#6e6e6e"/>
<rect x="1585.3" y="246" width="8.8" height="64" rx="4.4" fill="#767676" stroke="#ffffff" stroke-width="1.2"/>
<path d="M1585.5 789.6 L1589.6 796.8 L1593.7 789.6 Z" fill="#6e6e6e"/>
<rect x="0" y="800.3" width="1578" height="34" fill="#f2f2f2" />
<line x1="29" y1="800.8" x2="1578" y2="800.8" stroke="#dedede" stroke-width="1" />
<circle cx="30" cy="813.5" r="1.2" fill="#333"/>
<circle cx="30" cy="817.5" r="1.2" fill="#333"/>
<circle cx="30" cy="821.5" r="1.2" fill="#333"/>
<path d="M59.7 812.7 L52.5 817.2 L59.7 821.7 Z" fill="#6e6e6e"/>
<rect x="64.8" y="812.4" width="666" height="9.6" rx="4.8" fill="#737373" stroke="#ffffff" stroke-width="1.2"/>
<path d="M1566 812.3 L1573 816.9 L1566 821.5 Z" fill="#6e6e6e"/>
<rect x="0" y="834.3" width="1600" height="23.7" fill="#f3f3f3" />
<line x1="0" y1="834.5" x2="1600" y2="834.5" stroke="#d6d6d6" stroke-width="1" />
<text x="12.75" y="850.20" font-size="11.92" fill="#3a3a3a" textLength="32.25" lengthAdjust="spacingAndGlyphs" >Pronto</text>
<text x="63.40" y="850.20" font-size="11.92" fill="#3a3a3a" textLength="33.80" lengthAdjust="spacingAndGlyphs" >Calcula</text>
<g fill="none" stroke="#444" stroke-width="1.1"><path d="M126 851.8 H119.8 V840.2 H134.2 V845"/><line x1="119.8" y1="842.8" x2="134.2" y2="842.8"/><path d="M121.8 845.3 H124.5 M121.8 847.8 H124.5 M121.8 850.2 H124.5"/><circle cx="130" cy="848.3" r="3.4" stroke-width="1.3"/></g><circle cx="130" cy="848.3" r="1.6" fill="#333"/>
<g fill="none" stroke="#444" stroke-width="1.3" stroke-linecap="round"><circle cx="159.8" cy="840.6" r="1.9"/><path d="M154.2 842 C156 844.5 158 844.3 159.8 843.8 C161.6 843.3 163.5 842.5 165 841.3 M159.8 843.8 L159 847.3 L155.6 852 M159 847.3 L161 849.5"/><path d="M162.3 847.8 L166.8 852.3 M166.8 847.8 L162.3 852.3" stroke-width="1.1"/></g>
<text x="171.70" y="850.20" font-size="11.92" font-weight="700" fill="#222" textLength="131.50" lengthAdjust="spacingAndGlyphs" >Acessibilidade: investigar</text>
<rect x="1281.3" y="835" width="41.3" height="22" fill="#dadada" />
<g fill="none" stroke="#333" stroke-width="1.2"><rect x="1294.2" y="839.5" width="13" height="12.5"/><path d="M1298.5 839.5 V852 M1302.9 839.5 V852 M1294.2 843.7 H1307.2 M1294.2 847.9 H1307.2"/></g>
<g fill="none" stroke="#333" stroke-width="1.2"><rect x="1336.5" y="839.5" width="14" height="13"/><rect x="1339.5" y="842.5" width="8" height="7" stroke-width="0.9"/><path d="M1341 844.5 H1346 M1341 846 H1346 M1341 847.5 H1346" stroke-width="0.7"/></g>
<g fill="none" stroke="#333" stroke-width="1.2"><path d="M1378.7 839.5 V852.5 H1392.5 V839.5"/><path d="M1378.7 839.5 H1392.5 M1382.5 839.5 V847 H1386 V839.5" /></g>
<line x1="1412.3" y1="845.7" x2="1420.5" y2="845.7" stroke="#444" stroke-width="1.2" />
<line x1="1425.7" y1="845.7" x2="1530.8" y2="845.7" stroke="#777" stroke-width="1" />
<rect x="1470.4" y="840" width="5.4" height="11.4" fill="#6a6a6a" />
<line x1="1478" y1="842" x2="1478" y2="849.5" stroke="#777" stroke-width="1" />
<path d="M1536 845.7 H1543.8 M1539.9 841.8 V849.6" stroke="#444" stroke-width="1.2"/>
<text x="1557.60" y="850.00" font-size="11.92" fill="#3a3a3a" textLength="20.60" lengthAdjust="spacingAndGlyphs" >90%</text>
<rect x="0" y="0" width="1" height="858" fill="#6e6e6e" />
<rect x="0" y="857" width="1600" height="1" fill="#6e6e6e" />
</svg></body></html>
